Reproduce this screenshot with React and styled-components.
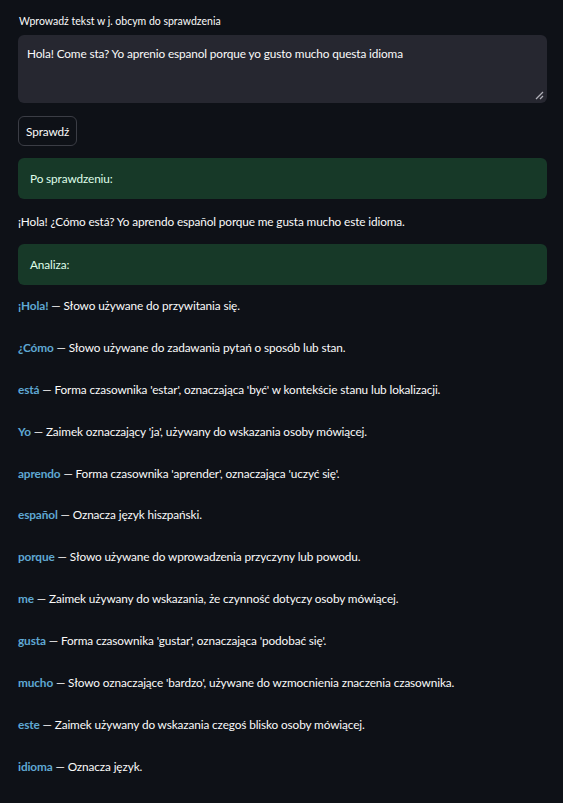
import React from 'react';
import styled, { createGlobalStyle } from 'styled-components';

const GlobalStyle = createGlobalStyle`
  html, body {
    margin: 0;
    padding: 0;
    background: #0e1117;
  }
  body {
    font-family: Lato, "Noto Sans", sans-serif;
    color: #fafafa;
  }
`;

const Page = styled.main`
  display: flex;
  flex-direction: column;
  padding: 14px 16px 0 18px;
  min-height: 803px;
  box-sizing: border-box;
`;

const Label = styled.label`
  font-size: 10.5px;
  line-height: 14px;
  margin-bottom: 7px;
  padding-left: 1px;
`;

const TextArea = styled.div`
  background: #262730;
  border-radius: 6px;
  height: 68px;
  padding: 11px 9px;
  box-sizing: border-box;
  font-size: 11.8px;
  letter-spacing: -0.12px;
  line-height: 16px;
  position: relative;
`;

const Grip = styled.svg`
  position: absolute;
  right: 3px;
  bottom: 3px;
`;

const Button = styled.button`
  align-self: flex-start;
  margin-top: 13px;
  height: 30px;
  padding: 0 7px;
  background: #0e1117;
  border: 1px solid #3b3d45;
  border-radius: 6px;
  color: #fafafa;
  font-family: inherit;
  font-size: 11.8px;
  letter-spacing: -0.12px;
`;

const SuccessBox = styled.div`
  margin-top: ${(p) => p.$top}px;
  height: 41px;
  display: flex;
  align-items: center;
  padding: 0 12px;
  background: #173928;
  border-radius: 6px;
  color: #dffde9;
  font-size: 11.8px;
  letter-spacing: -0.12px;
`;

const Paragraph = styled.p`
  margin: 0;
  padding-top: 15px;
  font-size: 11.8px;
  letter-spacing: -0.12px;
  line-height: 16px;
`;

const List = styled.div`
  display: flex;
  flex-direction: column;
  gap: 25.9px;
  margin-top: 13px;
`;

const Item = styled.p`
  margin: 0;
  font-size: 11.8px;
  letter-spacing: -0.12px;
  line-height: 16px;
`;

const Word = styled.strong`
  color: #5fa8d3;
  font-weight: 700;
`;

const items = [
  ['¡Hola!', 'Słowo używane do przywitania się.'],
  ['¿Cómo', 'Słowo używane do zadawania pytań o sposób lub stan.'],
  ['está', "Forma czasownika 'estar', oznaczająca 'być' w kontekście stanu lub lokalizacji."],
  ['Yo', "Zaimek oznaczający 'ja', używany do wskazania osoby mówiącej."],
  ['aprendo', "Forma czasownika 'aprender', oznaczająca 'uczyć się'."],
  ['español', 'Oznacza język hiszpański.'],
  ['porque', 'Słowo używane do wprowadzenia przyczyny lub powodu.'],
  ['me', 'Zaimek używany do wskazania, że czynność dotyczy osoby mówiącej.'],
  ['gusta', "Forma czasownika 'gustar', oznaczająca 'podobać się'."],
  ['mucho', "Słowo oznaczające 'bardzo', używane do wzmocnienia znaczenia czasownika."],
  ['este', 'Zaimek używany do wskazania czegoś blisko osoby mówiącej.'],
  ['idioma', 'Oznacza język.'],
];

export default function App() {
  return (
    <>
      <GlobalStyle />
      <Page>
        <Label>Wprowadź tekst w j. obcym do sprawdzenia</Label>
        <TextArea>
          Hola! Come sta? Yo aprenio espanol porque yo gusto mucho questa idioma
          <Grip width="9" height="9" viewBox="0 0 9 9">
            <path d="M8 1 L1 8 M8 5 L5 8" stroke="#b0b0b8" strokeWidth="1.3" />
          </Grip>
        </TextArea>
        <Button>Sprawdź</Button>
        <SuccessBox $top={12}>Po sprawdzeniu:</SuccessBox>
        <Paragraph>¡Hola! ¿Cómo está? Yo aprendo español porque me gusta mucho este idioma.</Paragraph>
        <SuccessBox $top={14}>Analiza:</SuccessBox>
        <List>
          {items.map(([w, d]) => (
            <Item key={w}>
              <Word>{w}</Word> — {d}
            </Item>
          ))}
        </List>
      </Page>
    </>
  );
}
